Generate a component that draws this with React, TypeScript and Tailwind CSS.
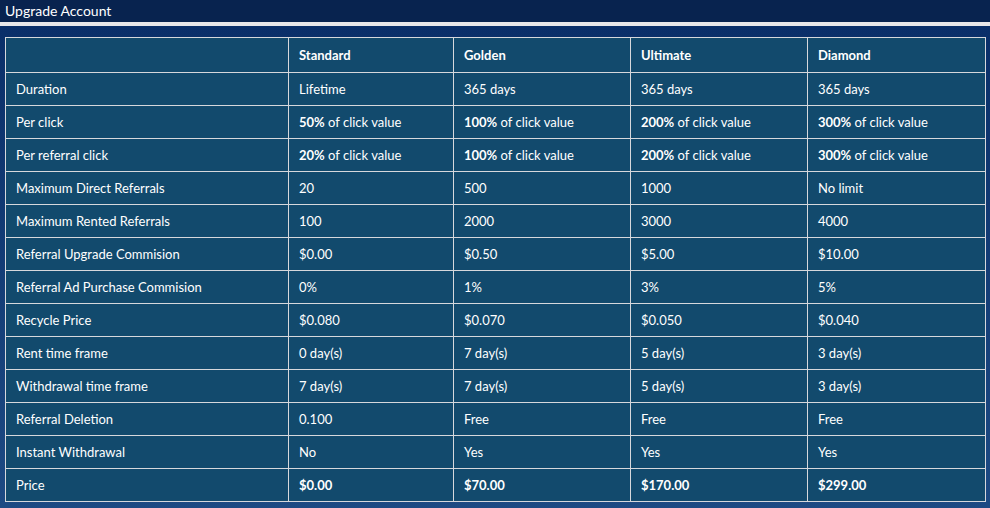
import React from "react";

type Cell = { b?: string; t?: string };

const cols = ["Standard", "Golden", "Ultimate", "Diamond"];

const rows: { label: string; cells: (string | Cell)[]; bold?: boolean }[] = [
  { label: "Duration", cells: ["Lifetime", "365 days", "365 days", "365 days"] },
  {
    label: "Per click",
    cells: [
      { b: "50%", t: " of click value" },
      { b: "100%", t: " of click value" },
      { b: "200%", t: " of click value" },
      { b: "300%", t: " of click value" },
    ],
  },
  {
    label: "Per referral click",
    cells: [
      { b: "20%", t: " of click value" },
      { b: "100%", t: " of click value" },
      { b: "200%", t: " of click value" },
      { b: "300%", t: " of click value" },
    ],
  },
  { label: "Maximum Direct Referrals", cells: ["20", "500", "1000", "No limit"] },
  { label: "Maximum Rented Referrals", cells: ["100", "2000", "3000", "4000"] },
  { label: "Referral Upgrade Commision", cells: ["$0.00", "$0.50", "$5.00", "$10.00"] },
  { label: "Referral Ad Purchase Commision", cells: ["0%", "1%", "3%", "5%"] },
  { label: "Recycle Price", cells: ["$0.080", "$0.070", "$0.050", "$0.040"] },
  { label: "Rent time frame", cells: ["0 day(s)", "7 day(s)", "5 day(s)", "3 day(s)"] },
  { label: "Withdrawal time frame", cells: ["7 day(s)", "7 day(s)", "5 day(s)", "3 day(s)"] },
  { label: "Referral Deletion", cells: ["0.100", "Free", "Free", "Free"] },
  { label: "Instant Withdrawal", cells: ["No", "Yes", "Yes", "Yes"] },
  { label: "Price", cells: ["$0.00", "$70.00", "$170.00", "$299.00"], bold: true },
];

const widths = ["w-[283px]", "w-[165px]", "w-[177px]", "w-[177px]", "w-[178px]"];

export default function App() {
  return (
    <div
      className="w-[990px] h-[508px] overflow-hidden text-white flex flex-col"
      style={{ fontFamily: "Lato, 'Open Sans', sans-serif" }}
    >
      <div className="h-[22px] bg-[#08234f] flex items-center px-[5px] text-[14px] leading-none shrink-0">
        Upgrade Account
      </div>
      <div className="h-[4px] bg-[#e8e8ea] shrink-0" />
      <div className="flex-1 bg-gradient-to-b from-[#0a2f69] to-[#1d4a83] pt-[11px] pl-[5px] pr-[5px]">
        <table className="border-collapse table-fixed w-[981px] text-[13px] leading-none">
          <colgroup>
            {widths.map((w, i) => (
              <col key={i} className={w} />
            ))}
          </colgroup>
          <thead>
            <tr className="h-[35px]">
              <th className="border border-[#d6d8dc] bg-[#124a6d]" />
              {cols.map((c) => (
                <th
                  key={c}
                  className="border border-[#d6d8dc] bg-[#124a6d] text-left font-bold pl-[10px]"
                >
                  {c}
                </th>
              ))}
            </tr>
          </thead>
          <tbody>
            {rows.map((r) => (
              <tr key={r.label} className="h-[33px]">
                <td className="border border-[#d6d8dc] bg-[#124a6d] pl-[10px]">{r.label}</td>
                {r.cells.map((c, i) => (
                  <td
                    key={i}
                    className={`border border-[#d6d8dc] bg-[#124a6d] pl-[10px] ${r.bold ? "font-bold" : ""}`}
                  >
                    {typeof c === "string" ? (
                      c
                    ) : (
                      <>
                        <span className="font-bold">{c.b}</span>
                        {c.t}
                      </>
                    )}
                  </td>
                ))}
              </tr>
            ))}
          </tbody>
        </table>
      </div>
    </div>
  );
}
